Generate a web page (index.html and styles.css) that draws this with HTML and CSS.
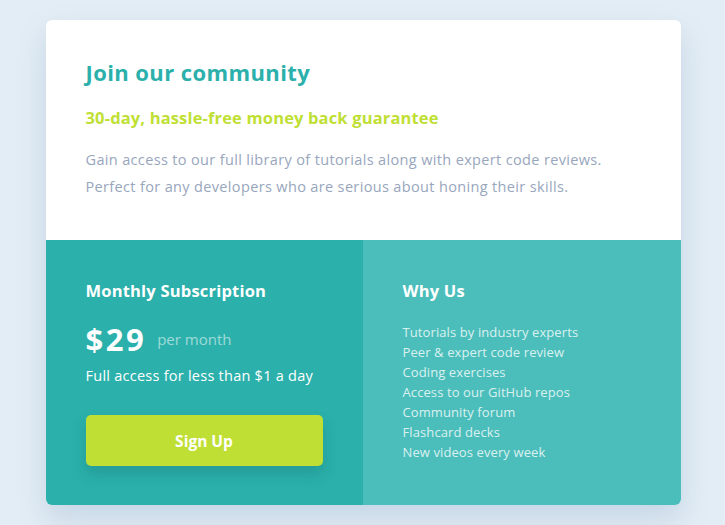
FILE: index.html
```html
<!DOCTYPE html>
<html lang="en">
<head>
<meta charset="utf-8">
<title>Join our community</title>
<link rel="stylesheet" href="styles.css">
</head>
<body>
<main class="card">
  <section class="intro">
    <h1 class="title">Join our community</h1>
    <h2 class="guarantee">30-day, hassle-free money back guarantee</h2>
    <p class="desc">Gain access to our full library of tutorials along with expert code reviews.<br>Perfect for any developers who are serious about honing their skills.</p>
  </section>
  <div class="bottom">
    <section class="sub">
      <h3 class="heading">Monthly Subscription</h3>
      <div class="price"><span class="amount">$29</span><span class="per">per month</span></div>
      <p class="access">Full access for less than $1 a day</p>
      <button class="signup">Sign Up</button>
    </section>
    <section class="why">
      <h3 class="heading">Why Us</h3>
      <ul class="list">
        <li>Tutorials by industry experts</li>
        <li>Peer &amp; expert code review</li>
        <li>Coding exercises</li>
        <li>Access to our GitHub repos</li>
        <li>Community forum</li>
        <li>Flashcard decks</li>
        <li>New videos every week</li>
      </ul>
    </section>
  </div>
</main>
</body>
</html>
```
FILE: styles.css
```css
* { box-sizing: border-box; }
html, body { margin: 0; }
body {
  background: #e3edf5;
  font-family: "Open Sans", "Lato", sans-serif;
  display: flex;
  justify-content: center;
  padding: 20px 0 0 1px;
  min-height: 525px;
}
.card {
  width: 635px;
  height: 485px;
  border-radius: 6px;
  overflow: hidden;
  background: #fff;
  box-shadow: 0 14px 30px rgba(60, 110, 160, 0.18);
  display: flex;
  flex-direction: column;
}
.intro {
  height: 220px;
  padding: 39px 40px 0;
}
.title {
  margin: 0;
  font-size: 22px;
  font-weight: 700;
  letter-spacing: 0.4px;
  color: #2bb0ab;
  line-height: 26px;
}
.guarantee {
  margin: 23px 0 0;
  font-size: 16.5px;
  font-weight: 700;
  letter-spacing: 0.15px;
  color: #c0df34;
  line-height: 20px;
}
.desc {
  margin: 18px 0 0;
  font-size: 14.5px;
  letter-spacing: 0.35px;
  line-height: 27px;
  color: #98a6bd;
}
.bottom {
  flex: 1;
  display: grid;
  grid-template-columns: 317px 318px;
}
.sub {
  background: #2bb0ab;
  padding: 40px 40px 0;
  color: #fff;
}
.why {
  background: #4bbebb;
  padding: 40px 40px 0;
  color: #fff;
}
.heading {
  margin: 0;
  font-size: 16.5px;
  font-weight: 700;
  letter-spacing: 0.2px;
  line-height: 22px;
}
.price {
  display: flex;
  align-items: center;
  margin-top: 19px;
  height: 36px;
}
.amount {
  font-size: 31px;
  font-weight: 700;
  letter-spacing: 2.5px;
}
.per {
  margin-left: 11px;
  font-size: 15px;
  color: rgba(255, 255, 255, 0.55);
}
.access {
  margin: 9px 0 0;
  font-size: 14.5px;
  letter-spacing: 0.25px;
  line-height: 20px;
}
.signup {
  display: block;
  margin-top: 29px;
  width: 237px;
  height: 51px;
  border: 0;
  border-radius: 5px;
  background: #c0df34;
  color: #fff;
  font-family: inherit;
  font-size: 15.5px;
  font-weight: 700;
  box-shadow: 0 8px 14px rgba(20, 90, 90, 0.25);
}
.list {
  list-style: none;
  margin: 20px 0 0;
  padding: 0;
  font-size: 13px;
  letter-spacing: 0.1px;
  line-height: 20px;
  color: rgba(255, 255, 255, 0.8);
}
```
